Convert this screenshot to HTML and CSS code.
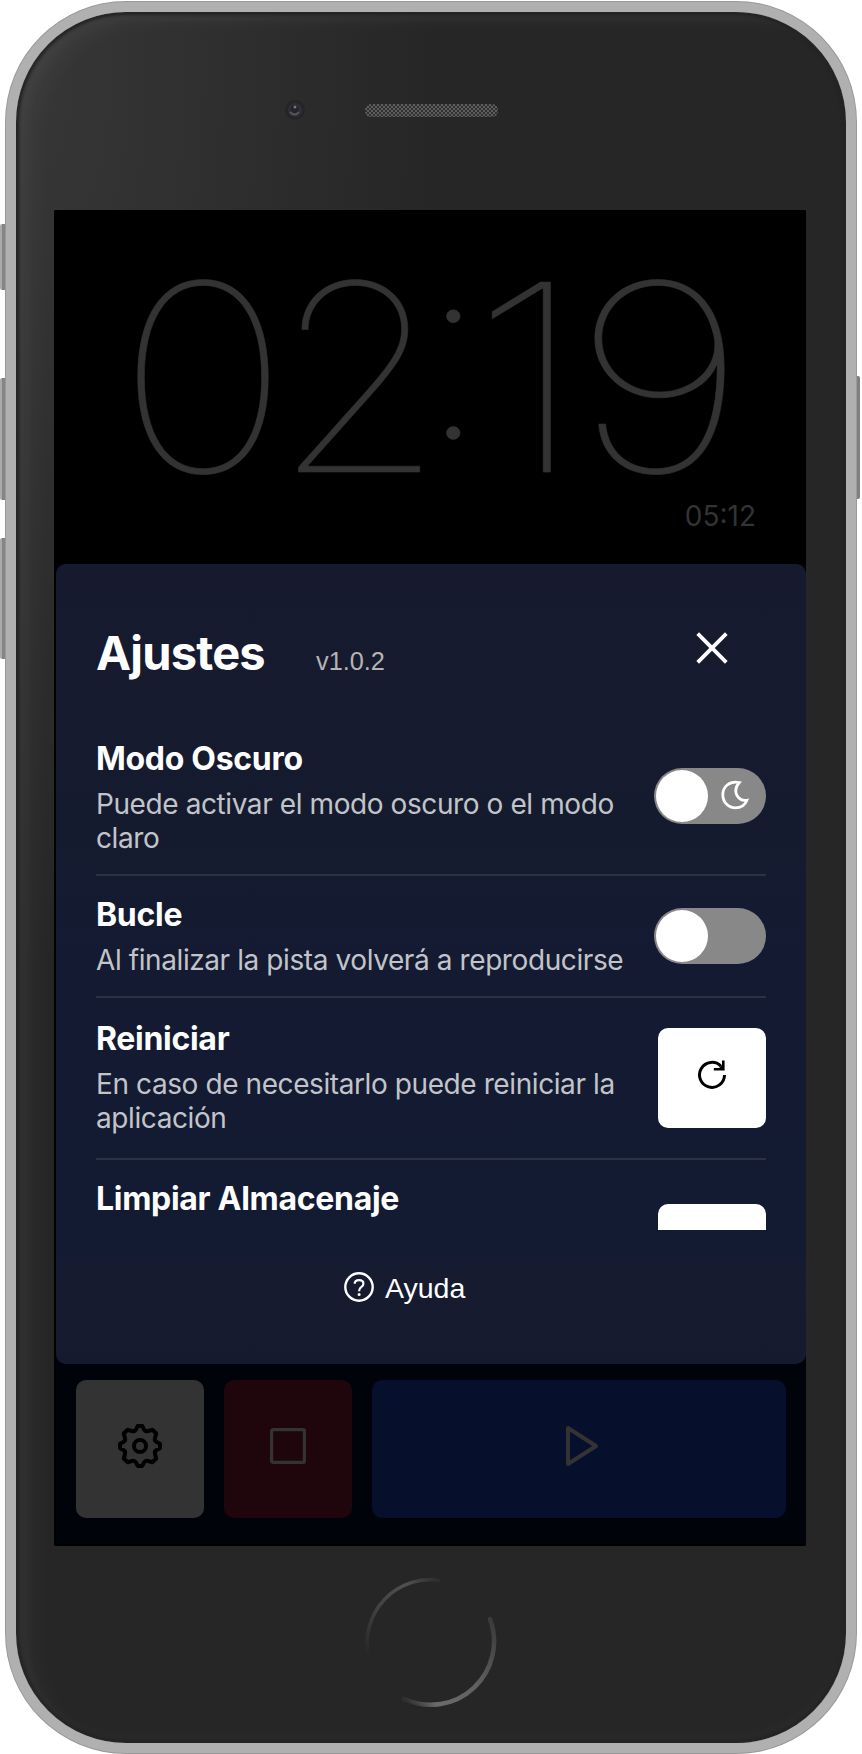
FILE: index.html
```html
<!DOCTYPE html>
<html lang="es">
<head>
<meta charset="utf-8">
<title>Ajustes</title>
<link rel="stylesheet" href="styles.css">
</head>
<body>
<div class="device">
  <span class="side-key key-mute"></span>
  <span class="side-key key-up"></span>
  <span class="side-key key-down"></span>
  <span class="side-key key-power"></span>
  <div class="bezel">
    <div class="top-bezel">
      <svg class="camera" width="24" height="24" viewBox="0 0 24 24"><circle cx="12" cy="12" r="10" fill="#252429"/><circle cx="12" cy="12" r="7" fill="#302f38"/><circle cx="11.500" cy="11" r="4" fill="#24232a"/><circle cx="12" cy="9" r="1.500" fill="#77777c"/><path d="M7 14q5 5 9 0" fill="none" stroke="#55555b" stroke-width="2"/></svg>
      <span class="speaker"></span>
    </div>
    <main class="screen">
      <section class="clock">
        <div class="elapsed"><span class="d0">0</span><span class="d1">2</span><span class="dc">:</span><span class="d2">1</span><span class="d3">9</span></div>
        <div class="total">05:12</div>
      </section>
      <section class="sheet">
        <header class="sheet-head">
          <h1>Ajustes</h1>
          <span class="version">v1.0.2</span>
          <svg class="close" width="32" height="32" viewBox="0 0 32 32"><path d="M1.700 1.700 30.300 30.300M30.300 1.700 1.700 30.300" stroke="#fff" stroke-width="3.800"/></svg>
        </header>
        <div class="list">
          <div class="row row-dark">
            <div class="label"><h2>Modo Oscuro</h2><p>Puede activar el modo oscuro o el modo<br>claro</p></div>
            <div class="toggle"><span class="knob"></span>
              <svg class="moon" width="30" height="30" viewBox="0 0 30 30"><path d="M18.300 2.500C8 .5 1.800 7.200 1.800 14.800c0 8 6.200 13.100 12.600 13.100 5.600 0 9.600-2.700 11.500-7.600-9 1.200-15.300-9-7.600-17.800Z" fill="none" stroke="#fff" stroke-width="2.800"/></svg>
            </div>
          </div>
          <div class="row row-loop">
            <div class="label"><h2>Bucle</h2><p>Al finalizar la pista volverá a reproducirse</p></div>
            <div class="toggle"><span class="knob"></span></div>
          </div>
          <div class="row row-reset">
            <div class="label"><h2>Reiniciar</h2><p>En caso de necesitarlo puede reiniciar la<br>aplicación</p></div>
            <div class="action"><svg width="32" height="32" viewBox="0 0 32 32"><path d="M28.500 17A12.500 12.500 0 1 1 25 8.200" fill="none" stroke="#000" stroke-width="3"/><path d="M27.300 2.500V11.300H17.800" fill="none" stroke="#000" stroke-width="2.600"/><path d="M27 6.500V11H22Z"/></svg></div>
          </div>
          <div class="row row-clean">
            <div class="label"><h2>Limpiar Almacenaje</h2></div>
            <div class="action"></div>
          </div>
        </div>
        <footer class="help">
          <svg width="32" height="32" viewBox="0 0 32 32" fill="none" stroke="#fff"><circle cx="16" cy="16" r="13.700" stroke-width="2.400"/><path d="M11.700 12.800Q11.600 9.200 16 9.200Q20.400 9.200 20.400 12.700Q20.400 14.700 18.200 16.100Q16.100 17.400 16.100 20.200" stroke-width="2.200"/><circle cx="16.100" cy="23.600" r="1.500" fill="#fff" stroke="none"/></svg>
          <span class="help-text">Ayuda</span>
        </footer>
      </section>
      <nav class="controls">
        <div class="btn settings"><svg width="48" height="48" viewBox="-24 -24 48 48" fill="none" stroke="#000" stroke-width="4" stroke-linejoin="round"><path d="M-2.300-20H2.300L4-16.500Q5.300-14.300 8-15L12.500-16.200L16.200-12.500L15-8Q14.300-5.300 16.500-4L20-2.300V2.300L16.500 4Q14.300 5.300 15 8L16.200 12.500L12.500 16.200L8 15Q5.300 14.300 4 16.500L2.300 20H-2.300L-4 16.500Q-5.300 14.300-8 15L-12.500 16.200L-16.200 12.500L-15 8Q-14.300 5.300-16.500 4L-20 2.300V-2.300L-16.500-4Q-14.300-5.300-15-8L-16.200-12.500L-12.500-16.200L-8-15Q-5.300-14.300-4-16.500Z"/><circle r="6"/></svg></div>
        <div class="btn stop"><svg width="36" height="36" viewBox="0 0 36 36"><rect x="1.600" y="1.600" width="32.800" height="32.800" rx="1.500" fill="none" stroke="#333" stroke-width="3.200"/></svg></div>
        <div class="btn play"><svg width="48" height="48" viewBox="0 0 48 48"><path d="M13 6V42L41 24Z" fill="none" stroke="#333" stroke-width="4" stroke-linejoin="round"/></svg></div>
      </nav>
    </main>
    <div class="chin">
      <svg class="home" width="136" height="136" viewBox="0 0 136 136" fill="none" stroke-linecap="round">
        <defs>
          <linearGradient id="arcA" gradientUnits="userSpaceOnUse" x1="8" y1="84" x2="78" y2="4"><stop offset="0" stop-color="#262626"/><stop offset=".4" stop-color="#424242"/><stop offset=".75" stop-color="#505050"/><stop offset="1" stop-color="#2a2a2a"/></linearGradient>
          <linearGradient id="arcB" gradientUnits="userSpaceOnUse" x1="128" y1="38" x2="42" y2="124"><stop offset="0" stop-color="#383838"/><stop offset=".5" stop-color="#606060"/><stop offset=".85" stop-color="#6b6b6b"/><stop offset="1" stop-color="#303030"/></linearGradient>
        </defs>
        <path d="M5 80A64 64 0 0 1 76 5" stroke="url(#arcA)" stroke-width="3.500"/>
        <path d="M127 44A63.500 63.500 0 0 1 41 124" stroke="url(#arcB)" stroke-width="4.500"/>
      </svg>
    </div>
  </div>
</div>
</body>
</html>
```
FILE: styles.css
```css
* { box-sizing: border-box; }
body { margin: 0; background: #fff; font-family: Inter, "Liberation Sans", sans-serif; width: 862px; height: 1754px; overflow: hidden; }
h1, h2, p { margin: 0; white-space: nowrap; }
svg { display: block; }

.device { position: relative; width: 862px; height: 1754px; padding: 2px 6px 0; }
.side-key { position: absolute; width: 8px; background: linear-gradient(90deg, #aaa 2px, #858585 2px); border-radius: 2px 0 0 2px; }
.key-mute { left: 0; top: 224px; height: 66px; }
.key-up { left: 0; top: 378px; height: 122px; }
.key-down { left: 0; top: 538px; height: 121px; }
.key-power { right: 2px; top: 376px; height: 123px; background: #808080; border-radius: 0 2px 2px 0; }

.bezel {
  position: relative;
  width: 850px;
  height: 1751px;
  border: 10px solid #b0b0b0;
  border-radius: 120px;
  padding: 0 38px;
  background: radial-gradient(ellipse 420px 900px at 0 60px, #373737, #262626) #262626;
  box-shadow: inset 0 0 3px 3px #232323, inset 12px 8px 10px rgba(255,255,255,.035), inset 24px 14px 20px rgba(255,255,255,.025), inset -2px -10px 8px rgba(255,255,255,.02), inset 0 0 0 1px #777, 0 0 0 1px #999;
}
.top-bezel { position: relative; height: 198px; }
.camera { position: absolute; left: 229px; top: 86px; }
.speaker {
  position: absolute; left: 311px; top: 92px; width: 133px; height: 13px; border-radius: 6px;
  background: repeating-conic-gradient(#303030 0 25%, #5e5e5e 0 50%) 0 0 / 4px 4px;
}
.screen { width: 752px; height: 1336px; display: flex; flex-direction: column; background: #01030b; border-radius: 2px; overflow: hidden; box-shadow: inset 2px -2px #000; }

.clock { height: 354px; background: #000; color: #333; padding: 50px 50px 0 66px; }
.elapsed { display: flex; height: 236px; font-size: 261px; line-height: 234px; font-weight: 100; -webkit-text-stroke: .6px #333; }
.elapsed span { display: block; text-align: center; white-space: nowrap; }
.d0 { width: 166px; transform: scaleX(1.12); }
.d1 { width: 142px; transform: translateX(-9px) scaleX(1.06); }
.dc { width: 50px; transform: translate(-10px, -29px) scaleY(.95); }
.d2 { width: 96px; transform: translateX(2px) scaleX(1.22); }
.d3 { width: 150px; transform: translateX(10.5px) scaleX(1.18); }
.total { text-align: right; font-size: 28px; line-height: 40px; }

.sheet { width: 750px; height: 800px; margin-left: 2px; border-radius: 10px; padding: 0 40px; color: #fff; background: linear-gradient(#161a2f 0, #151b2f 280px, #131a32 400px, #131b33 690px, #161b2f 710px, #161a2e 100%); }
.sheet-head { height: 158px; display: flex; align-items: flex-start; }
h1 { width: 220px; padding-top: 60px; font-size: 47px; line-height: 58px; font-weight: 700; letter-spacing: -.8px; }
.version { width: 374px; padding-top: 83px; font: 25.3px/28px "Liberation Sans", Arial, sans-serif; color: #b4b4b4; }
.close { margin: 68px 0 0 6px; flex: none; }
.list { height: 508px; overflow: hidden; }
.row { display: flex; justify-content: space-between; align-items: flex-start; border-bottom: 2px solid #2c3243; }
.label { width: 540px; }
h2 { font-size: 32px; line-height: 40px; font-weight: 700; letter-spacing: -.3px; }
p { margin-top: 8px; font-size: 28px; line-height: 34px; letter-spacing: -.41px; color: #c2c4c9; }
.row-dark { height: 154px; padding-top: 17px; }
.row-dark .toggle { margin-top: 29px; }
.row-loop { height: 122px; padding-top: 19px; }
.row-loop .toggle { margin-top: 13px; }
.row-reset { height: 162px; padding-top: 21px; }
.row-reset .action { margin-top: 9px; }
.row-clean { height: 162px; padding-top: 19px; }
.row-clean .action { margin-top: 25px; }
.toggle { width: 112px; height: 56px; flex: none; border-radius: 28px; padding: 2px; background: #888; display: flex; }
.knob { width: 52px; height: 52px; border-radius: 50%; background: #fff; }
.moon { margin: 10px 0 0 13px; }
.action { width: 108px; height: 100px; flex: none; border-radius: 10px; background: #fff; padding: 30px 0 0 38px; }
.help { display: flex; align-items: center; gap: 10px; margin-top: 41px; padding-left: 247px; height: 32px; font: 28.5px/32px "Liberation Sans", Arial, sans-serif; }
.help-text { padding-top: 2px; }

.controls { display: flex; gap: 20px; padding: 16px 20px 0 22px; }
.btn { width: 128px; height: 138px; border-radius: 10px; display: flex; align-items: center; justify-content: center; padding-bottom: 6px; }
.settings { background: #333; }
.stop { background: #1f060c; }
.play { background: #06102d; flex: 1; }
.chin { display: flex; justify-content: center; padding-top: 29px; }
```
